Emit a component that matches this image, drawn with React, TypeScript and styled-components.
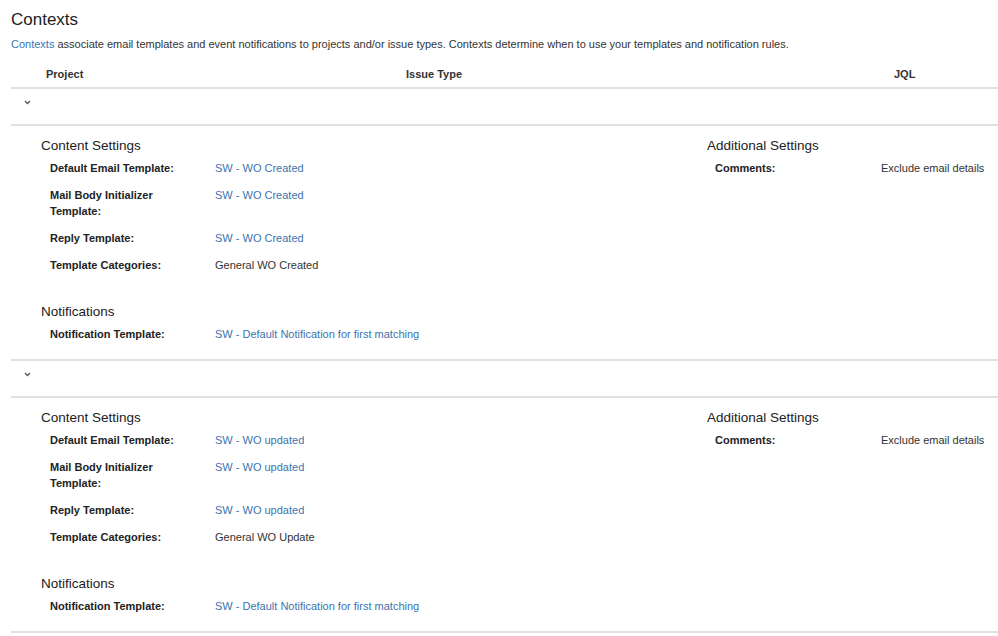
import React, { FC } from 'react'
import styled, { createGlobalStyle } from 'styled-components'

const GlobalStyle = createGlobalStyle`
  body {
    margin: 0;
    background: #fff;
    font-family: "Liberation Sans", Arial, sans-serif;
    color: #333;
  }
`

const Page = styled.div`
  padding: 8px 0 0 11px;
`

const Title = styled.h2`
  margin: 0 0 4px;
  font-size: 17px;
  font-weight: normal;
  line-height: 24px;
  color: #222;
`

const Intro = styled.p`
  margin: 0;
  font-size: 11px;
  line-height: 16px;
`

const Link = styled.a`
  color: #3b73af;
  text-decoration: none;
  cursor: pointer;
`

const HeaderRow = styled.div`
  display: grid;
  grid-template-columns: 35px 360px 488px 1fr;
  padding: 14px 0 5px;
  border-bottom: 2px solid #e0e0e0;
  font-size: 11px;
  font-weight: bold;
  line-height: 16px;
`

const ToggleRow = styled.div`
  box-sizing: border-box;
  height: 37px;
  padding: 11px 0 0 13px;
  border-bottom: 2px solid #e0e0e0;
  display: flex;
  align-items: flex-start;
`

const Details = styled.div`
  display: flex;
  padding: 11px 0 17px 30px;
  border-bottom: 2px solid #e0e0e0;
`

const Panel = styled.div<{ $width?: number }>`
  width: ${p => (p.$width ? `${p.$width}px` : 'auto')};
  flex: ${p => (p.$width ? 'none' : '1')};
`

const SectionTitle = styled.h3<{ $spaced?: boolean }>`
  margin: ${p => (p.$spaced ? '30px' : '0')} 0 5px;
  font-size: 13.5px;
  font-weight: normal;
  line-height: 18px;
  color: #222;
`

const FieldRow = styled.div<{ $indent: number }>`
  display: flex;
  padding-left: ${p => p.$indent}px;
  margin-bottom: 11px;
  font-size: 11px;
  line-height: 16px;
  &:last-child {
    margin-bottom: 0;
  }
`

const Label = styled.div<{ $width: number }>`
  width: ${p => p.$width}px;
  flex: none;
  padding-right: 28px;
  box-sizing: border-box;
  font-weight: bold;
  color: #222;
`

const Value = styled.div`
  flex: 1;
`

const Chevron = () => (
  <svg width="7" height="5" viewBox="0 0 7 5">
    <path d="M1 1 L3.5 3.5 L6 1" fill="none" stroke="#555" strokeWidth="1.3" />
  </svg>
)

interface Field {
  label: string
  value: string
  link?: boolean
}

interface ContextData {
  content: Field[]
  notifications: Field[]
  additional: Field[]
}

const contexts: ContextData[] = [
  {
    content: [
      { label: 'Default Email Template:', value: 'SW - WO Created', link: true },
      { label: 'Mail Body Initializer Template:', value: 'SW - WO Created', link: true },
      { label: 'Reply Template:', value: 'SW - WO Created', link: true },
      { label: 'Template Categories:', value: 'General WO Created' },
    ],
    notifications: [
      { label: 'Notification Template:', value: 'SW - Default Notification for first matching', link: true },
    ],
    additional: [{ label: 'Comments:', value: 'Exclude email details' }],
  },
  {
    content: [
      { label: 'Default Email Template:', value: 'SW - WO updated', link: true },
      { label: 'Mail Body Initializer Template:', value: 'SW - WO updated', link: true },
      { label: 'Reply Template:', value: 'SW - WO updated', link: true },
      { label: 'Template Categories:', value: 'General WO Update' },
    ],
    notifications: [
      { label: 'Notification Template:', value: 'SW - Default Notification for first matching', link: true },
    ],
    additional: [{ label: 'Comments:', value: 'Exclude email details' }],
  },
]

const Fields: FC<{ items: Field[]; indent: number; labelWidth: number }> = ({ items, indent, labelWidth }) => (
  <div>
    {items.map((f, i) => (
      <FieldRow key={i} $indent={indent}>
        <Label $width={labelWidth}>{f.label}</Label>
        <Value>{f.link ? <Link>{f.value}</Link> : f.value}</Value>
      </FieldRow>
    ))}
  </div>
)

const ContextBlock: FC<{ data: ContextData }> = ({ data }) => (
  <>
    <ToggleRow>
      <Chevron />
    </ToggleRow>
    <Details>
      <Panel $width={666}>
        <SectionTitle>Content Settings</SectionTitle>
        <Fields items={data.content} indent={9} labelWidth={165} />
        <SectionTitle $spaced>Notifications</SectionTitle>
        <Fields items={data.notifications} indent={9} labelWidth={165} />
      </Panel>
      <Panel>
        <SectionTitle>Additional Settings</SectionTitle>
        <Fields items={data.additional} indent={8} labelWidth={166} />
      </Panel>
    </Details>
  </>
)

const App: FC = () => (
  <Page>
    <GlobalStyle />
    <Title>Contexts</Title>
    <Intro>
      <Link>Contexts</Link> associate email templates and event notifications to projects and/or issue types.
      Contexts determine when to use your templates and notification rules.
    </Intro>
    <HeaderRow>
      <span />
      <span>Project</span>
      <span>Issue Type</span>
      <span>JQL</span>
    </HeaderRow>
    {contexts.map((c, i) => (
      <ContextBlock key={i} data={c} />
    ))}
  </Page>
)

export default App
